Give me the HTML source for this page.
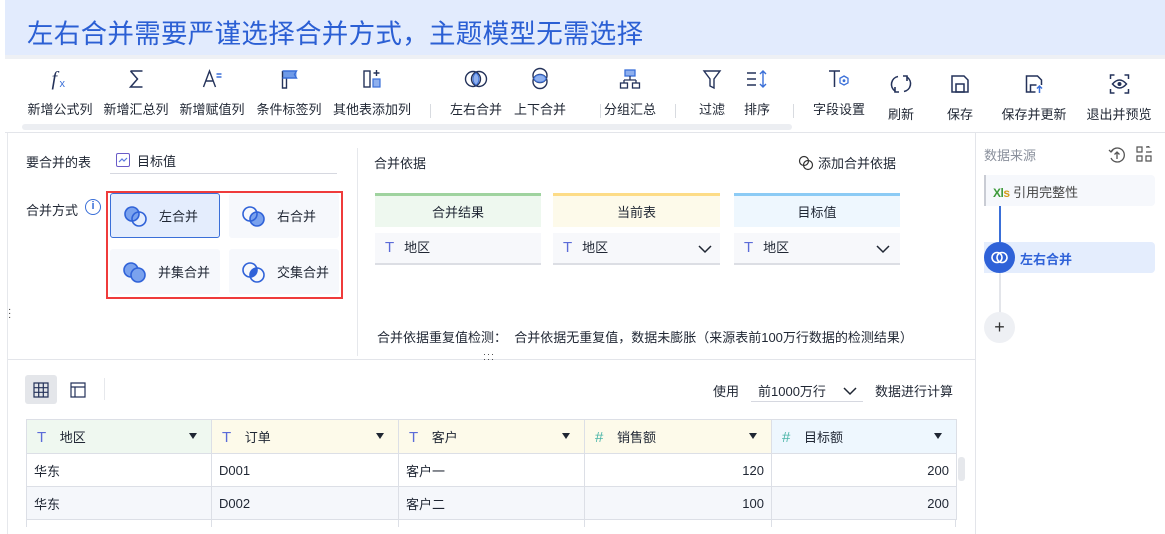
<!DOCTYPE html>
<html><head><meta charset="utf-8"><style>
*{margin:0;padding:0;box-sizing:border-box}
html,body{width:1165px;height:534px;overflow:hidden}
body{background:#fff;font-family:"Liberation Sans","Noto Sans CJK SC",sans-serif;font-size:13px;color:#1f2633;position:relative}
.a{position:absolute}
.title{left:5px;top:0;width:1160px;height:55px;background:#e2ebfd;color:#2b5fd4;font-size:26.5px;padding:12px 0 0 22px;letter-spacing:0.3px;white-space:nowrap}
.strip{left:5px;top:55px;width:1160px;height:4px;background:#eef0f4}
.tb{top:59px;height:74px;left:5px;width:1160px;background:#fff;border-bottom:1px solid #e3e5ea}
.it{position:absolute;text-align:center;font-size:13px;white-space:nowrap;transform:translateX(-50%)}
.it svg{display:block;margin:0 auto 9px}
.sep{position:absolute;top:104px;width:1px;height:14px;background:#d8dbe0}
.lbl{font-size:13px;color:#1f2633}
.opt{position:absolute;width:110px;height:45px;border-radius:3px;background:#f6f8fc;font-size:13px;display:flex;align-items:center;padding-left:12px;gap:10px}
.hd{position:absolute;height:34px;text-align:center;line-height:34px;border-top:3px solid}
.fd{position:absolute;height:32px;background:#f7f8fb;border-bottom:2px solid #dcdee4;line-height:30px;padding-left:10px}
.T{color:#5b6bd8;font-size:15px;margin-right:10px}
table{border-collapse:collapse;position:absolute;left:26px;top:419px;width:930px;table-layout:fixed}
td{border:1px solid #dcdfe6;height:33px;padding:0 7px;font-size:13px}
th{border:1px solid #dcdfe6;height:34px;font-weight:normal;text-align:left;padding:0 10px;font-size:13px;position:relative}
th .tri{position:absolute;right:14px;top:13px;width:0;height:0;border-left:4px solid transparent;border-right:4px solid transparent;border-top:6px solid #1f2633}
</style></head><body>
<div class="a title">左右合并需要严谨选择合并方式，主题模型无需选择</div>
<div class="a strip"></div>
<div class="a tb"></div>
<div class="a" style="left:22px;top:124px;width:770px;height:6px;border-radius:3px;background:#eceef2"></div>

<div class="it" style="left:60px;top:68px"><svg width="22" height="22" viewBox="0 0 22 22"><text x="2" y="17" font-family="Liberation Serif" font-style="italic" font-size="20" fill="#24325a">f</text><text x="10" y="19" font-size="11" fill="#3a6fd8" font-family="Liberation Sans">x</text></svg>新增公式列</div>
<div class="it" style="left:136px;top:68px"><svg width="22" height="22"><path d="M5 3h12M5 3l7 8-7 8h12" fill="none" stroke="#24325a" stroke-width="1.5"/></svg>新增汇总列</div>
<div class="it" style="left:212px;top:68px"><svg width="22" height="22"><path d="M2 19L8 3l6 16M4.5 13h7" fill="none" stroke="#24325a" stroke-width="1.4"/><path d="M15 6h5M15 9h5" stroke="#3a6fd8" stroke-width="1.4"/></svg>新增赋值列</div>
<div class="it" style="left:289px;top:68px"><svg width="22" height="22"><rect x="4" y="3" width="14" height="7" fill="#6e9ae8"/><path d="M4 3v17h4V10" fill="none" stroke="#24325a" stroke-width="1.4"/><path d="M4 3h14l-2 3.5 2 3.5H4" fill="none" stroke="#3a6fd8" stroke-width="1.4"/></svg>条件标签列</div>
<div class="it" style="left:372px;top:68px"><svg width="22" height="22"><rect x="3" y="3" width="6" height="16" fill="none" stroke="#24325a" stroke-width="1.4"/><rect x="12" y="11" width="7" height="8" fill="#8fb0ee" stroke="#3a6fd8" stroke-width="1.2"/><path d="M15.5 2v6M12.5 5h6" stroke="#24325a" stroke-width="1.4"/></svg>其他表添加列</div>
<div class="sep" style="left:430px"></div>
<div class="it" style="left:476px;top:68px"><svg width="26" height="22"><circle cx="10" cy="11" r="7.5" fill="none" stroke="#24325a" stroke-width="1.4"/><circle cx="16" cy="11" r="7.5" fill="none" stroke="#24325a" stroke-width="1.4"/><path d="M13 5a7.5 7.5 0 0 1 0 12a7.5 7.5 0 0 1 0-12z" fill="#8fb0ee" stroke="#3a6fd8"/></svg>左右合并</div>
<div class="it" style="left:540px;top:67px"><svg width="22" height="23"><circle cx="11" cy="8.5" r="7" fill="none" stroke="#24325a" stroke-width="1.4"/><circle cx="11" cy="14.5" r="7" fill="none" stroke="#24325a" stroke-width="1.4"/><path d="M4.8 11.5a7 7 0 0 1 12.4 0a7 7 0 0 1-12.4 0z" fill="#8fb0ee" stroke="#3a6fd8"/></svg>上下合并</div>
<div class="sep" style="left:600px"></div>
<div class="it" style="left:630px;top:68px"><svg width="22" height="22"><rect x="6" y="2" width="10" height="6" fill="#8fb0ee" stroke="#3a6fd8" stroke-width="1.3"/><path d="M11 8v4M5 12h12M5 12v3M17 12v3" fill="none" stroke="#24325a" stroke-width="1.3"/><rect x="1.5" y="15" width="7" height="5" fill="none" stroke="#24325a" stroke-width="1.3"/><rect x="13.5" y="15" width="7" height="5" fill="none" stroke="#24325a" stroke-width="1.3"/></svg>分组汇总</div>
<div class="sep" style="left:675px"></div>
<div class="it" style="left:712px;top:68px"><svg width="22" height="22"><path d="M3 3h16l-6 8v9l-4-2v-7z" fill="none" stroke="#24325a" stroke-width="1.4"/></svg>过滤</div>
<div class="it" style="left:757px;top:68px"><svg width="24" height="22"><path d="M2 5h9M2 11h9M2 17h9" stroke="#24325a" stroke-width="1.4"/><path d="M18 3v16M15 6l3-3 3 3M15 16l3 3 3-3" fill="none" stroke="#3a6fd8" stroke-width="1.4"/></svg>排序</div>
<div class="sep" style="left:793px"></div>
<div class="it" style="left:839px;top:68px"><svg width="24" height="22"><path d="M2 3h11M7.5 3v16" stroke="#24325a" stroke-width="1.5"/><path d="M17 8l4 2.3v4.6L17 17l-4-2.1v-4.6z" fill="none" stroke="#3a6fd8" stroke-width="1.3"/><circle cx="17" cy="12.7" r="1.4" fill="#3a6fd8"/></svg>字段设置</div>
<div class="it" style="left:901px;top:73px"><svg width="22" height="22"><path d="M8 3.5A8 8 0 0 0 5 18M14 18.5A8 8 0 0 0 17 4" fill="none" stroke="#24325a" stroke-width="1.6"/><path d="M5 14v5h4M17 8V3h-4" fill="none" stroke="#24325a" stroke-width="1.6"/></svg>刷新</div>
<div class="it" style="left:960px;top:73px"><svg width="22" height="22"><path d="M3 3h12l4 4v12H3z" fill="none" stroke="#24325a" stroke-width="1.5"/><rect x="7" y="11" width="8" height="8" fill="none" stroke="#24325a" stroke-width="1.5"/></svg>保存</div>
<div class="it" style="left:1034px;top:73px"><svg width="22" height="22"><path d="M12 19H3V3h11l4 4v5" fill="none" stroke="#24325a" stroke-width="1.5"/><path d="M7 19v-7h6" fill="none" stroke="#24325a" stroke-width="1.5"/><path d="M16 20v-7M13.5 15.5l2.5-2.5 2.5 2.5" fill="none" stroke="#3a6fd8" stroke-width="1.5"/></svg>保存并更新</div>
<div class="it" style="left:1119px;top:73px"><svg width="22" height="22"><path d="M2 6V2h4M16 2h4v4M20 16v4h-4M6 20H2v-4" fill="none" stroke="#24325a" stroke-width="1.5"/><path d="M4 11q7-8 14 0q-7 8-14 0z" fill="none" stroke="#24325a" stroke-width="1.5"/><circle cx="11" cy="11" r="2" fill="#24325a"/></svg>退出并预览</div>

<!-- left panel -->
<div class="a" style="left:7px;top:133px;width:1px;height:401px;background:#e6e8ec"></div>
<div class="a lbl" style="left:26px;top:152px">要合并的表</div>
<div class="a" style="left:116px;top:153px;width:14px;height:14px;border:1.3px solid #6a5cc8;border-radius:2px"><svg width="12" height="12" style="position:absolute;left:0;top:0"><path d="M2 8l3-3 2 2 3-3" fill="none" stroke="#5a7be0" stroke-width="1.2"/></svg></div>
<div class="a lbl" style="left:137px;top:151px">目标值</div>
<div class="a" style="left:110px;top:173px;width:227px;height:1px;background:#d6d8e0"></div>
<div class="a lbl" style="left:26px;top:200px">合并方式</div>
<div class="a" style="left:85px;top:199px;width:16px;height:16px;border:1.4px solid #3a6fd8;border-radius:50%;color:#3a6fd8;font-size:11px;text-align:center;line-height:13px;font-weight:bold">i</div>
<div class="a" style="left:106px;top:191px;width:237px;height:108px;border:2px solid #ef3b3b"></div>
<div class="opt" style="left:110px;top:193px;background:#e4edfd;border:1px solid #3a6fd8"><svg width="26" height="24"><circle cx="9" cy="10" r="7" fill="#7aa2ee" stroke="#2f62d8" stroke-width="1.6"/><circle cx="16" cy="15" r="7" fill="none" stroke="#2f62d8" stroke-width="1.6"/></svg>左合并</div>
<div class="opt" style="left:229px;top:193px"><svg width="26" height="24"><circle cx="16" cy="15" r="7" fill="#7aa2ee" stroke="#2f62d8" stroke-width="1.6"/><circle cx="9" cy="10" r="7" fill="none" stroke="#2f62d8" stroke-width="1.6"/></svg>右合并</div>
<div class="opt" style="left:110px;top:249px"><svg width="26" height="24"><circle cx="9" cy="10" r="7" fill="#7aa2ee" stroke="#2f62d8" stroke-width="1.6"/><circle cx="16" cy="15" r="7" fill="#7aa2ee" stroke="#2f62d8" stroke-width="1.6"/></svg>并集合并</div>
<div class="opt" style="left:229px;top:249px"><svg width="26" height="24"><circle cx="9" cy="10" r="7" fill="none" stroke="#2f62d8" stroke-width="1.6"/><circle cx="16" cy="15" r="7" fill="none" stroke="#2f62d8" stroke-width="1.6"/><path d="M9.5 17a7 7 0 0 1 6-9.5a7 7 0 0 1-6 9.5z" fill="#2f62d8"/></svg>交集合并</div>
<div class="a" style="left:357px;top:148px;width:1px;height:208px;background:#e6e8ec"></div>
<div class="a" style="left:8px;top:308px;font-size:10px;line-height:4px;color:#333">·<br>·<br>·</div>

<div class="a lbl" style="left:374px;top:153px">合并依据</div>
<div class="a lbl" style="left:798px;top:153px"><svg width="16" height="16" style="vertical-align:-3px;margin-right:4px"><circle cx="6" cy="6" r="4.5" fill="none" stroke="#333" stroke-width="1.2"/><circle cx="10" cy="10" r="4.5" fill="none" stroke="#333" stroke-width="1.2"/></svg>添加合并依据</div>
<div class="hd" style="left:375px;top:193px;width:166px;background:#eef8ef;border-color:#9fd39f">合并结果</div>
<div class="hd" style="left:553px;top:193px;width:167px;background:#fdfaea;border-color:#fddc87">当前表</div>
<div class="hd" style="left:734px;top:193px;width:166px;background:#eef7fe;border-color:#8ccbf5">目标值</div>
<div class="fd" style="left:375px;top:233px;width:166px"><span class="T">T</span>地区</div>
<div class="fd" style="left:553px;top:233px;width:167px"><span class="T">T</span>地区<svg width="14" height="10" style="position:absolute;right:8px;top:11px"><path d="M1 2l6 6 6-6" fill="none" stroke="#1f2633" stroke-width="1.5"/></svg></div>
<div class="fd" style="left:734px;top:233px;width:166px"><span class="T">T</span>地区<svg width="14" height="10" style="position:absolute;right:10px;top:11px"><path d="M1 2l6 6 6-6" fill="none" stroke="#1f2633" stroke-width="1.5"/></svg></div>
<div class="a lbl" style="left:377px;top:327px">合并依据重复值检测：&nbsp;&nbsp;合并依据无重复值，数据未膨胀（来源表前100万行数据的检测结果）</div>
<div class="a" style="left:8px;top:359px;width:967px;height:1px;background:#e3e5ea"></div>
<div class="a" style="left:483px;top:352px;font-size:9px;line-height:5px;letter-spacing:1px;color:#333">···<br>···</div>

<!-- bottom -->
<div class="a" style="left:25px;top:375px;width:32px;height:29px;background:#e4e6ea;border-radius:3px"></div>
<svg class="a" style="left:33px;top:382px" width="16" height="16"><path d="M1 1h14v14H1zM1 5.7h14M1 10.3h14M5.7 1v14M10.3 1v14" fill="none" stroke="#24325a" stroke-width="1.2"/></svg>
<svg class="a" style="left:70px;top:382px" width="16" height="16"><path d="M1 1h14v14H1zM1 5h14M5 5v10" fill="none" stroke="#24325a" stroke-width="1.2"/></svg>
<div class="a" style="left:104px;top:378px;width:1px;height:22px;background:#e6e8ec"></div>
<div class="a lbl" style="left:713px;top:381px">使用</div>
<div class="a lbl" style="left:751px;top:374px;width:112px;height:28px;border-bottom:1px solid #d6d8e0;padding:7px 0 0 7px">前1000万行<svg width="14" height="10" style="position:absolute;right:6px;top:12px"><path d="M1 2l6 6 6-6" fill="none" stroke="#1f2633" stroke-width="1.5"/></svg></div>
<div class="a lbl" style="left:875px;top:381px">数据进行计算</div>

<table>
<colgroup><col style="width:185px"><col style="width:187px"><col style="width:186px"><col style="width:187px"><col style="width:185px"></colgroup>
<tr><th style="background:#eff8f0"><span class="T">T</span>&nbsp;地区<i class="tri"></i></th><th style="background:#fdfaea"><span class="T">T</span>&nbsp;订单<i class="tri"></i></th><th style="background:#fdfaea"><span class="T">T</span>&nbsp;客户<i class="tri"></i></th><th style="background:#fdfaea"><span class="T" style="color:#4bb5a8">#</span>&nbsp;销售额<i class="tri"></i></th><th style="background:#eef7fe"><span class="T" style="color:#4bb5a8">#</span>&nbsp;目标额<i class="tri"></i></th></tr>
<tr><td>华东</td><td>D001</td><td>客户一</td><td style="text-align:right">120</td><td style="text-align:right">200</td></tr>
<tr style="background:#f5f7fb"><td>华东</td><td>D002</td><td>客户二</td><td style="text-align:right">100</td><td style="text-align:right">200</td></tr>
</table>
<div class="a" style="left:211px;top:519px;width:1px;height:8px;background:#dcdfe6"></div>
<div class="a" style="left:398px;top:519px;width:1px;height:8px;background:#dcdfe6"></div>
<div class="a" style="left:584px;top:519px;width:1px;height:8px;background:#dcdfe6"></div>
<div class="a" style="left:771px;top:519px;width:1px;height:8px;background:#dcdfe6"></div>
<div class="a" style="left:26px;top:519px;width:1px;height:8px;background:#dcdfe6"></div>
<div class="a" style="left:955px;top:519px;width:1px;height:8px;background:#dcdfe6"></div>
<div class="a" style="left:958px;top:457px;width:7px;height:24px;border-radius:3px;background:#e6e8ec"></div>

<!-- right panel -->
<div class="a" style="left:975px;top:133px;width:190px;height:401px;background:#fff;border-left:1px solid #e3e5ea"></div>
<div class="a" style="left:984px;top:145px;color:#8a909c">数据来源</div>
<svg class="a" style="left:1108px;top:146px" width="18" height="18"><path d="M3 6a7 7 0 1 1 0 6" fill="none" stroke="#555" stroke-width="1.3"/><path d="M1 4l2 2 2-2M9 13V6M6.5 8.5L9 6l2.5 2.5" fill="none" stroke="#555" stroke-width="1.3"/></svg>
<svg class="a" style="left:1136px;top:146px" width="16" height="16"><path d="M1 1h5v5H1zM10 10h5v5h-5zM1 10h5v5H1zM10 1h3l-1.5-1.5M15 5v1h-5" fill="none" stroke="#555" stroke-width="1.2"/></svg>
<div class="a" style="left:984px;top:175px;width:171px;height:31px;background:#f6f8fc;border-left:2px solid #c9ccd4;border-radius:0 4px 4px 0;padding:7px 0 0 7px;color:#444"><span style="color:#3d9a3a;font-size:12px;font-weight:bold;letter-spacing:-0.5px">Xl<span style="color:#d39c19">s</span></span> 引用完整性</div>
<div class="a" style="left:999px;top:206px;width:2px;height:36px;background:#3a6fd8"></div>
<div class="a" style="left:984px;top:242px;width:171px;height:31px;background:#e4edfd;border-radius:0 4px 4px 0"></div>
<div class="a" style="left:984px;top:242px;width:31px;height:31px;border-radius:50%;background:#2f62d8"><svg width="31" height="31"><circle cx="13" cy="15.5" r="5" fill="none" stroke="#fff" stroke-width="1.6"/><circle cx="18" cy="15.5" r="5" fill="none" stroke="#fff" stroke-width="1.6"/></svg></div>
<div class="a" style="left:1020px;top:249px;color:#2f62d8;font-weight:bold">左右合并</div>
<div class="a" style="left:999px;top:273px;width:2px;height:40px;background:#e3e5ea"></div>
<div class="a" style="left:984px;top:312px;width:31px;height:31px;border-radius:50%;background:#eef0f4;text-align:center;line-height:30px;font-size:18px;color:#333">+</div>
</body></html>
